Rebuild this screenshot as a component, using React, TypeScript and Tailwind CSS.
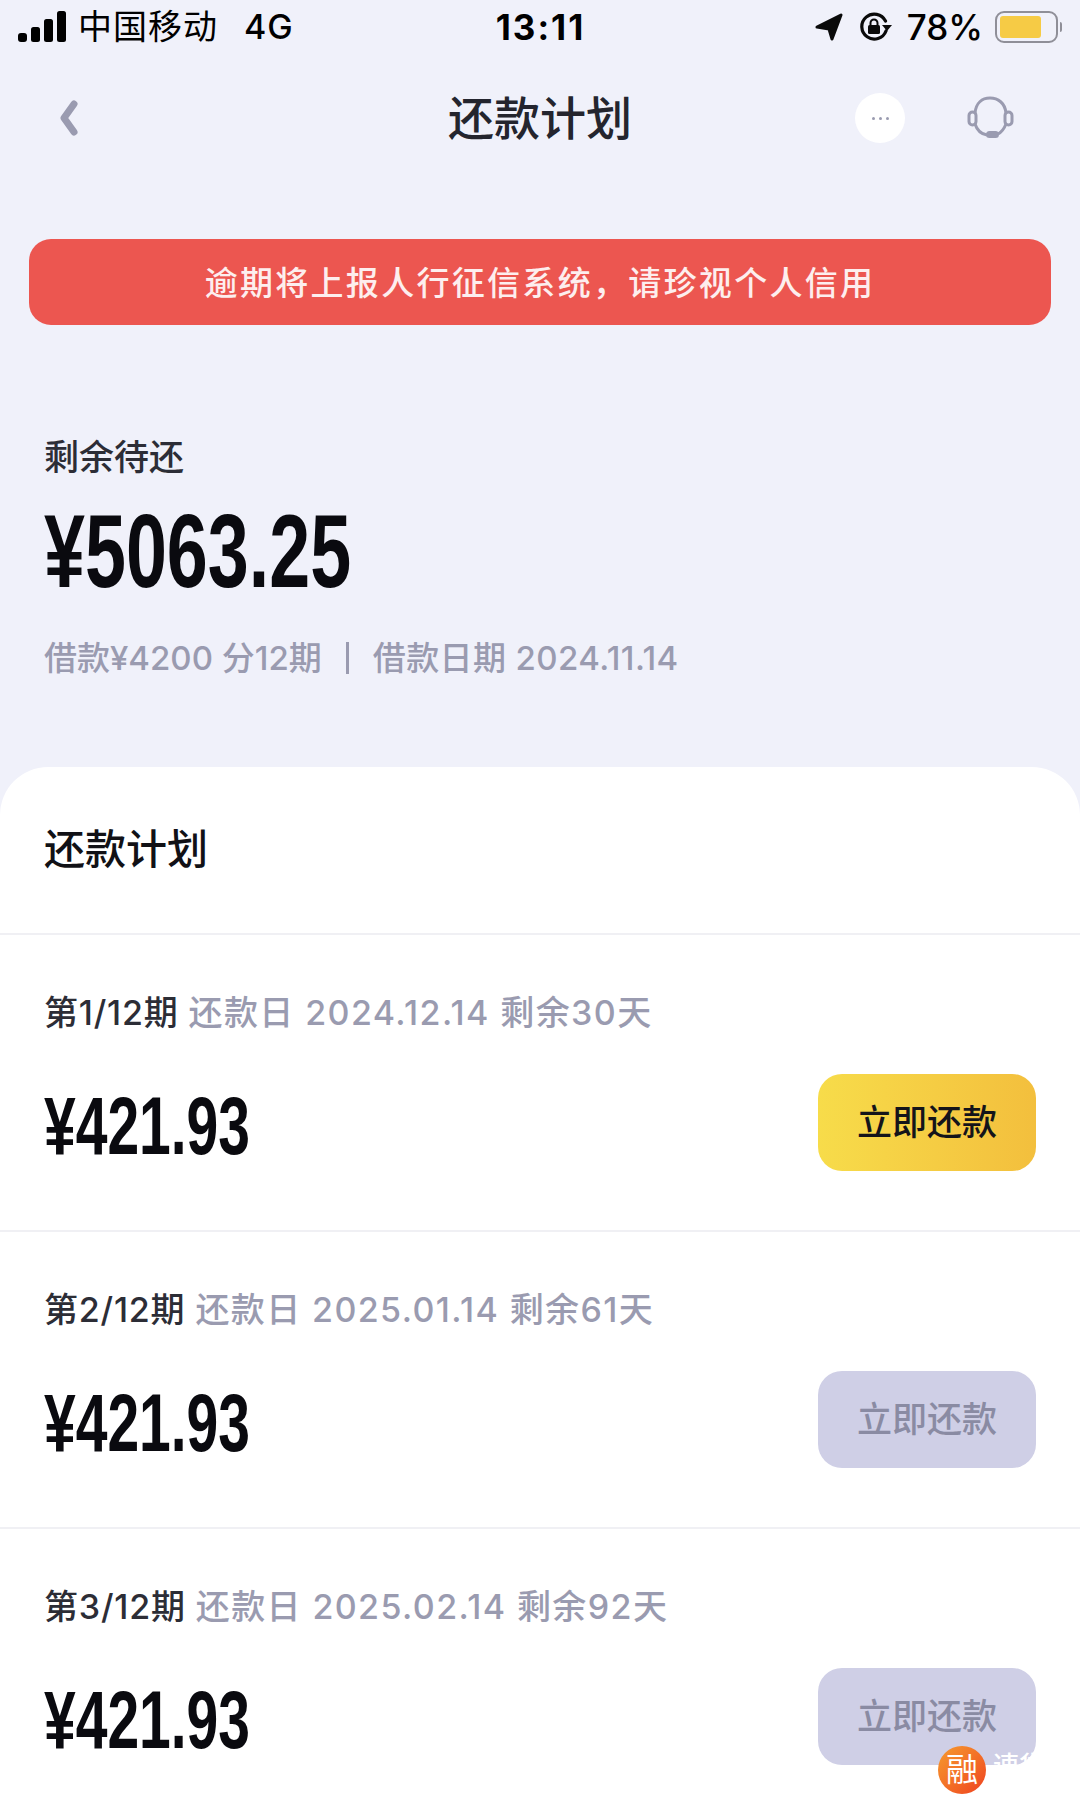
import React from "react";

const rows = [
  { label: "第1/12期", date: "还款日 2024.12.14 剩余30天", active: true },
  { label: "第2/12期", date: "还款日 2025.01.14 剩余61天", active: false },
  { label: "第3/12期", date: "还款日 2025.02.14 剩余92天", active: false },
];

function Signal() {
  return (
    <svg width="50" height="32" viewBox="0 0 50 32" className="text-black">
      <rect x="0" y="22" width="9" height="9" rx="3" fill="currentColor" />
      <rect x="13" y="16" width="9" height="15" rx="2.5" fill="currentColor" />
      <rect x="26" y="8" width="9" height="23" rx="2.5" fill="currentColor" />
      <rect x="39" y="0" width="9" height="31" rx="2.5" fill="currentColor" />
    </svg>
  );
}

function LocationArrow() {
  return (
    <svg width="28" height="28" viewBox="0 0 28 28">
      <path d="M2 14 L26 2 L17 26 L14 16 Z" fill="#0a0a0a" stroke="#0a0a0a" strokeWidth="3" strokeLinejoin="round" />
    </svg>
  );
}

function RotationLock() {
  return (
    <svg width="34" height="30" viewBox="0 0 34 30" fill="none">
      <path d="M27 19 A12.5 12.5 0 1 1 26.5 9" stroke="#0a0a0a" strokeWidth="3.2" strokeLinecap="round" />
      <path d="M23 13 L33 13 L28 19 Z" fill="#0a0a0a" />
      <rect x="9" y="13" width="12" height="9" rx="1.5" fill="#0a0a0a" />
      <path d="M11.5 13 V11 a3.5 3.5 0 0 1 7 0 V13" stroke="#0a0a0a" strokeWidth="2" />
    </svg>
  );
}

function Battery() {
  return (
    <div className="flex items-center">
      <div className="flex h-[32px] w-[63px] items-center rounded-[9px] border-[2.5px] border-[#8f8f98] p-[3px]">
        <div className="h-full w-[41px] rounded-[3px] bg-[#f6cb45]" />
      </div>
      <div className="ml-[2px] h-[10px] w-[2px] rounded-r-sm bg-[#8f8f98]" />
    </div>
  );
}

function Headset() {
  return (
    <svg width="48" height="44" viewBox="0 0 48 44" fill="none">
      <path d="M8 17 C9 7 15 2 23 2 C31 2 38 7 39 17" stroke="#9a9bb0" strokeWidth="3" />
      <path d="M8 28 C10 34 13 38 20 39" stroke="#9a9bb0" strokeWidth="3" />
      <path d="M39 28 C37 33 35 36 31 38" stroke="#9a9bb0" strokeWidth="3" />
      <rect x="2" y="16" width="7" height="13" rx="3.5" stroke="#9a9bb0" strokeWidth="3" />
      <rect x="38" y="16" width="7" height="13" rx="3.5" stroke="#9a9bb0" strokeWidth="3" />
      <rect x="19" y="35" width="13" height="7" rx="3.5" fill="#9a9bb0" />
    </svg>
  );
}

function Chevron() {
  return (
    <svg width="20" height="36" viewBox="0 0 20 36" fill="none">
      <path d="M15 4 L5 18 L15 32" stroke="#9a9bb0" strokeWidth="7" strokeLinecap="round" strokeLinejoin="round" />
    </svg>
  );
}

export default function App() {
  return (
    <div className="relative h-[1805px] w-[1080px] overflow-hidden bg-[#f0f1fa] font-['Inter','Noto_Sans_CJK_SC',sans-serif]">
      {/* status bar */}
      <div className="flex h-[54px] items-center pl-[18px] pr-[18px] text-black">
        <Signal />
        <span className="ml-[10px] text-[34px] tracking-[1px] leading-none">中国移动</span>
        <span className="ml-[26px] text-[34px] font-medium tracking-[1px] leading-none">4G</span>
        <span className="ml-[202px] text-[35px] font-bold tracking-[2px] leading-none">13:11</span>
        <div className="ml-auto flex items-center">
          <LocationArrow />
          <div className="ml-[16px]">
            <RotationLock />
          </div>
          <span className="ml-[14px] text-[35px] font-medium leading-none">78%</span>
          <div className="ml-[12px]">
            <Battery />
          </div>
        </div>
      </div>

      {/* nav */}
      <div className="relative flex h-[128px] items-center pl-[59px] pr-[65px]">
        <Chevron />
        <h1 className="absolute left-0 right-0 text-center text-[46px] font-medium leading-none text-[#24252e]">
          还款计划
        </h1>
        <div className="ml-auto flex items-center gap-[62px]">
          <div className="flex h-[50px] w-[50px] items-center justify-center gap-[4px] rounded-full bg-white">
            <span className="h-[3px] w-[3px] rounded-full bg-[#9a9bb0]" />
            <span className="h-[3px] w-[3px] rounded-full bg-[#9a9bb0]" />
            <span className="h-[3px] w-[3px] rounded-full bg-[#9a9bb0]" />
          </div>
          <Headset />
        </div>
      </div>

      {/* overdue notice */}
      <div className="mx-[29px] mt-[57px] flex h-[86px] items-center justify-center rounded-[22px] bg-[#ec5650] font-['Noto_Sans_CJK_SC',sans-serif] text-[33px] font-medium tracking-[2.3px] text-[#fdeeee]">
        {"逾期将上报人行征信系统\uFF0C请珍视个人信用"}
      </div>

      {/* balance */}
      <div className="px-[44px] pt-[112px]">
        <div className="text-[35px] font-medium leading-[40px] text-[#2c2d36]">剩余待还</div>
        <div className="mt-[23px] h-[104px] origin-left scale-x-[0.715] font-['Liberation_Sans'] text-[103px] font-bold leading-[104px] text-[#0a0a0f]">
          ¥5063.25
        </div>
        <div className="mt-[34px] flex items-center text-[33px] font-medium leading-[40px] text-[#9a9bb0]">
          <span>借款¥4200 分12期</span>
          <span className="ml-[24px] h-[32px] w-[3px] bg-[#9a9bb0]" />
          <span className="ml-[24px] tracking-[0.4px]">借款日期 2024.11.14</span>
        </div>
      </div>

      {/* plan card */}
      <div className="absolute inset-x-0 top-[767px] bottom-0 rounded-t-[48px] bg-white">
        <div className="flex h-[168px] items-center border-b-2 border-[#f0f0f4] px-[44px] text-[41px] font-medium text-[#111116]">
          还款计划
        </div>
        {rows.map((row) => (
          <div key={row.label} className="h-[297px] border-b-2 border-[#f0f0f4] px-[44px] pt-[58px]">
            <div className="flex items-center text-[34px] font-medium leading-[40px]">
              <span className="tracking-[0.8px] text-[#2c2d36]">{row.label}</span>
              <span className="ml-[10px] tracking-[1.4px] text-[#9a9bb0]">{row.date}</span>
            </div>
            <div className="mt-[41px] flex items-center justify-between">
              <div className="h-[97px] origin-left scale-x-[0.695] font-['Liberation_Sans'] text-[82px] font-bold leading-[103px] text-[#0a0a0f]">
                ¥421.93
              </div>
              <button
                className={
                  row.active
                    ? "h-[97px] w-[218px] rounded-[24px] bg-gradient-to-r from-[#f7dc4a] to-[#f3bf3d] text-[35px] font-medium text-[#14141a]"
                    : "h-[97px] w-[218px] rounded-[24px] bg-[#cfcfe6] text-[35px] font-medium text-[#8a8ba3]"
                }
              >
                立即还款
              </button>
            </div>
          </div>
        ))}
      </div>

      {/* watermark */}
      <div className="absolute left-[938px] top-[1746px] flex h-[48px] w-[48px] items-center justify-center rounded-full bg-gradient-to-br from-[#f59a2e] to-[#ee3d20] text-[32px] leading-none text-white">
        融
      </div>
      <div className="absolute left-[993px] top-[1753px] text-[26px] font-medium leading-none text-white">
        速贷
      </div>
    </div>
  );
}
